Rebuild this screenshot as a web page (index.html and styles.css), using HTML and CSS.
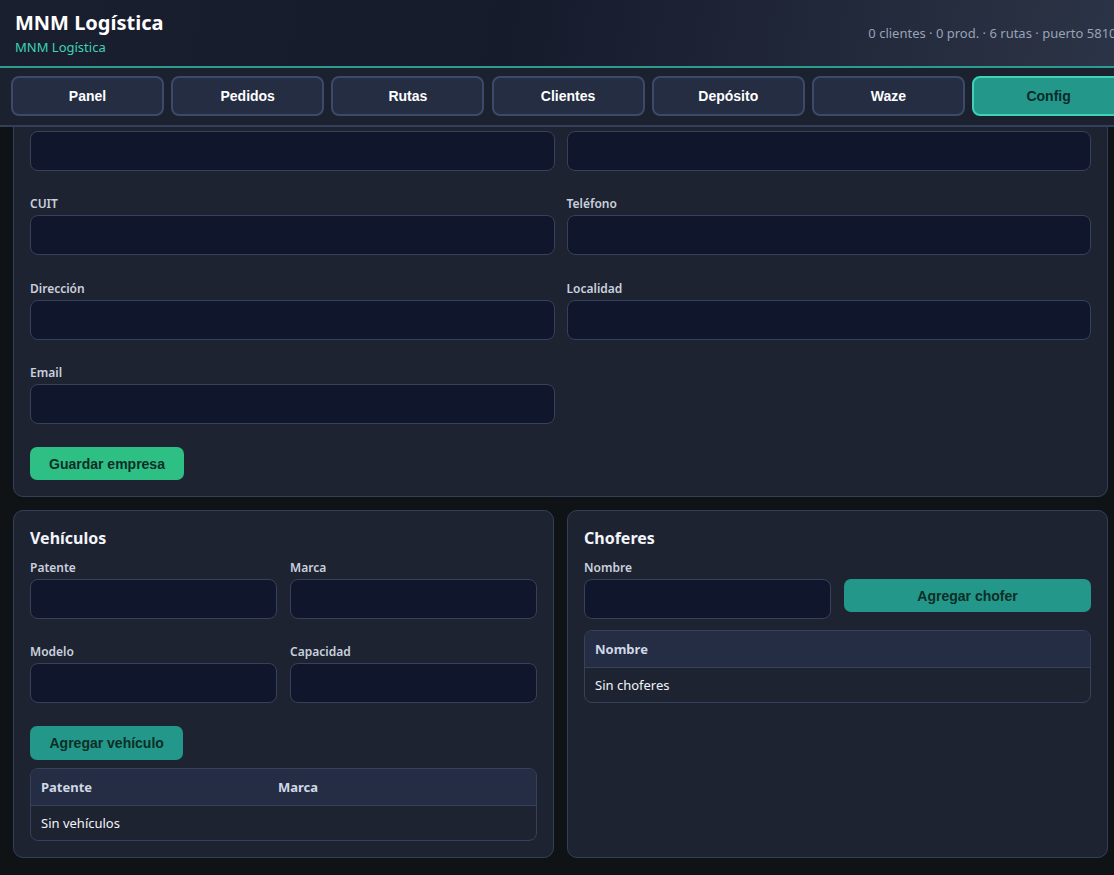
FILE: index.html
```html
<!DOCTYPE html>
<html lang="es">
<head>
  <meta charset="UTF-8">
  <meta name="viewport" content="width=device-width, initial-scale=1.0">
  <title>MNM Logística</title>
  <link rel="stylesheet" href="styles.css">
</head>
<body>
  <div class="top">
    <header class="header">
      <div class="brand">
        <h1>MNM Logística</h1>
        <div class="sub">MNM Logística</div>
      </div>
      <div class="stats">0 clientes · 0 prod. · 6 rutas · puerto 58100</div>
    </header>
    <nav class="tabs">
      <button class="tab">Panel</button>
      <button class="tab">Pedidos</button>
      <button class="tab">Rutas</button>
      <button class="tab">Clientes</button>
      <button class="tab">Depósito</button>
      <button class="tab">Waze</button>
      <button class="tab active">Config</button>
    </nav>
  </div>

  <main class="main">
    <!-- empresa (scrolled, its top edge sits under the nav) -->
    <section class="card first">
      <div class="grid">
        <div class="field"><input type="text"></div>
        <div class="field"><input type="text"></div>
        <div class="field"><label>CUIT</label><input type="text"></div>
        <div class="field"><label>Teléfono</label><input type="text"></div>
        <div class="field"><label>Dirección</label><input type="text"></div>
        <div class="field"><label>Localidad</label><input type="text"></div>
        <div class="field"><label>Email</label><input type="text"></div>
      </div>
      <button class="btn green save">Guardar empresa</button>
    </section>

    <div class="cols">
      <section class="card">
        <h2>Vehículos</h2>
        <div class="grid small">
          <div class="field"><label>Patente</label><input type="text"></div>
          <div class="field"><label>Marca</label><input type="text"></div>
          <div class="field"><label>Modelo</label><input type="text"></div>
          <div class="field"><label>Capacidad</label><input type="text"></div>
        </div>
        <button class="btn teal add-veh">Agregar vehículo</button>
        <div class="table-wrap veh">
          <table>
            <thead><tr><th class="c1">Patente</th><th>Marca</th></tr></thead>
            <tbody><tr><td colspan="2">Sin vehículos</td></tr></tbody>
          </table>
        </div>
      </section>

      <section class="card">
        <h2>Choferes</h2>
        <div class="field"><label>Nombre</label></div>
        <div class="inline">
          <input type="text">
          <button class="btn teal">Agregar chofer</button>
        </div>
        <div class="table-wrap chof">
          <table>
            <thead><tr><th>Nombre</th></tr></thead>
            <tbody><tr><td>Sin choferes</td></tr></tbody>
          </table>
        </div>
      </section>
    </div>
  </main>
</body>
</html>
```

FILE: styles.css
```css
* {
  box-sizing: border-box;
}
html, body {
  margin: 0;
  padding: 0;
  background: #0f1316;
  overflow: hidden;
}
body {
  font-family: "Noto Sans", "Open Sans", sans-serif;
  color: #e6ebf3;
  height: 875px;
}
.top {
  position: relative;
  z-index: 2;
  width: 1136px;
}
.header {
  height: 68px;
  display: flex;
  justify-content: space-between;
  align-items: center;
  padding: 0 15px;
  background: linear-gradient(100deg, #1a1f2f 0%, #161b2c 45%, #2c3547 100%);
  border-bottom: 2px solid #2a9d8f;
}
.header h1 {
  margin: 0;
  font-size: 20px;
  line-height: 26px;
  font-weight: 700;
  color: #fff;
}
.sub {
  font-size: 13px;
  line-height: 18px;
  color: #3dd3b4;
  margin-top: 2px;
}
.stats {
  font-size: 13px;
  color: #98a3b6;
  white-space: nowrap;
  margin-right: -3px;
}
.tabs {
  display: flex;
  gap: 7.2px;
  padding: 8px 11px 9px;
  background: #1c2130;
  border-bottom: 2px solid #34405a;
}
.tab {
  flex: 0 0 153px;
  height: 40px;
  font-family: "Liberation Sans", Arial, sans-serif;
  font-size: 14px;
  font-weight: 700;
  color: #fff;
  background: #242d42;
  border: 2px solid #3b4a68;
  border-radius: 8px;
}
.tab.active {
  background: #23988a;
  border-color: #3fd2b6;
  color: #0b2a2a;
}
.main {
  padding: 0 6px 0 13px;
}
.card {
  background: #1e2331;
  border: 1px solid #34405a;
  border-radius: 10px;
  padding: 16px;
}
.card.first {
  /* page is scrolled: top edge slides under the nav */
  margin-top: -13px;
}
.card h2 {
  margin: 0 0 11px;
  font-size: 16px;
  line-height: 22px;
  font-weight: 700;
  color: #f2f5fa;
}
.grid {
  display: grid;
  grid-template-columns: 1fr 1fr;
  column-gap: 12px;
  row-gap: 25.4px;
}
.grid.small {
  column-gap: 13px;
  row-gap: 25px;
}
.field label {
  display: block;
  font-size: 12px;
  line-height: 15px;
  font-weight: 600;
  color: #c9d1df;
  margin-bottom: 4px;
}
input {
  display: block;
  width: 100%;
  height: 40px;
  background: #10162b;
  border: 1px solid #36425c;
  border-radius: 8px;
  color: #fff;
}
.btn {
  font-family: "Liberation Sans", Arial, sans-serif;
  font-size: 14px;
  font-weight: 700;
  border: none;
  border-radius: 7px;
  color: #0c2e26;
  padding: 0 17px;
  height: 33px;
}
.btn.green {
  background: #2ebf85;
}
.btn.teal {
  background: #23978a;
}
.save {
  margin-top: 23px;
  padding: 0 19px;
}
.add-veh {
  margin-top: 23px;
  height: 34px;
  padding: 0 19.5px;
}
.cols {
  display: grid;
  grid-template-columns: 1fr 1fr;
  gap: 13px;
  margin-top: 13px;
}
.inline {
  display: grid;
  grid-template-columns: 1fr 1fr;
  gap: 13px;
  align-items: start;
}
.table-wrap {
  border: 1px solid #36425c;
  border-radius: 8px;
  overflow: hidden;
}
.table-wrap.veh {
  margin-top: 8px;
}
.table-wrap.chof {
  margin-top: 11px;
}
table {
  width: 100%;
  border-collapse: collapse;
  font-size: 13px;
}
th {
  text-align: left;
  font-weight: 700;
  color: #d0d8e6;
  background: #242d43;
  padding: 0 10px;
  height: 36px;
  border-bottom: 1px solid #36425c;
}
th.c1 {
  width: 237px;
}
td {
  padding: 0 10px;
  height: 35px;
  color: #f2f5fa;
}
```
